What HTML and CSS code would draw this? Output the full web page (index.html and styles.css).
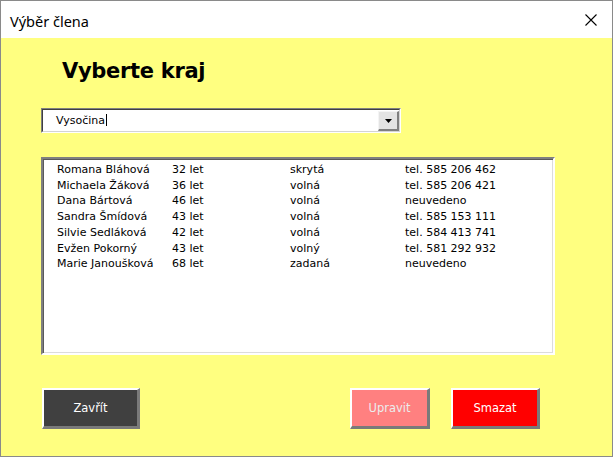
FILE: index.html
```html
<!DOCTYPE html>
<html lang="cs">
<head>
<meta charset="utf-8">
<title>Výběr člena</title>
<link rel="stylesheet" href="styles.css">
</head>
<body>
<div class="window">
  <div class="titlebar">
    <span class="title">Výběr člena</span>
    <svg class="close" width="12" height="12" viewBox="0 0 12 12" aria-hidden="true">
      <path d="M0.5 0.5 L11.5 11.5 M11.5 0.5 L0.5 11.5" stroke="#000" stroke-width="1.1" fill="none"/>
    </svg>
  </div>
  <div class="client">
    <h1 class="heading">Vyberte kraj</h1>
    <div class="combo">
      <div class="combo-inner">
        <div class="combo-text">Vysočina<span class="caret"></span></div>
        <div class="combo-btn">
          <svg width="7" height="4" viewBox="0 0 7 4" aria-hidden="true"><polygon points="0,0 7,0 3.5,4" fill="#000"/></svg>
        </div>
      </div>
    </div>
    <div class="listbox">
      <div class="row"><span>Romana Bláhová</span><span>32 let</span><span>skrytá</span><span>tel. 585 206 462</span></div>
      <div class="row"><span>Michaela Žáková</span><span>36 let</span><span>volná</span><span>tel. 585 206 421</span></div>
      <div class="row"><span>Dana Bártová</span><span>46 let</span><span>volná</span><span>neuvedeno</span></div>
      <div class="row"><span>Sandra Šmídová</span><span>43 let</span><span>volná</span><span>tel. 585 153 111</span></div>
      <div class="row"><span>Silvie Sedláková</span><span>42 let</span><span>volná</span><span>tel. 584 413 741</span></div>
      <div class="row"><span>Evžen Pokorný</span><span>43 let</span><span>volný</span><span>tel. 581 292 932</span></div>
      <div class="row"><span>Marie Janoušková</span><span>68 let</span><span>zadaná</span><span>neuvedeno</span></div>
    </div>
    <div class="buttons">
      <button class="btn btn-close">Zavřít</button>
      <button class="btn btn-edit">Upravit</button>
      <button class="btn btn-delete">Smazat</button>
    </div>
  </div>
</div>
</body>
</html>
```

FILE: styles.css
```css
* { box-sizing: border-box; }
html, body { margin: 0; padding: 0; background: #ffff80; }

.window {
  width: 613px;
  height: 457px;
  border: 1px solid #8a8a8a;
  background: #ffff80;
  display: flex;
  flex-direction: column;
}

.titlebar {
  height: 37px;
  background: #fff;
  display: flex;
  align-items: center;
  padding-left: 9px;
  flex: none;
}
.title {
  font-family: "Noto Sans", "DejaVu Sans", sans-serif;
  font-size: 14.5px;
  color: #000;
  position: relative;
  top: 1px;
}
.close {
  margin-left: auto;
  margin-right: 15px;
  display: block;
}

.client {
  flex: 1;
  padding-left: 40px;
  display: flex;
  flex-direction: column;
  align-items: flex-start;
}

.heading {
  margin: 21px 0 0 21px;
  font-family: "DejaVu Sans", Verdana, sans-serif;
  font-weight: bold;
  font-size: 21px;
  letter-spacing: -0.3px;
  line-height: 25px;
  color: #000;
}

/* Combo box: sunken 3D frame */
.combo {
  margin-top: 24px;
  width: 360px;
  height: 25px;
  border-style: solid;
  border-width: 1px;
  border-color: #808080 #fff #fff #808080;
}
.combo-inner {
  height: 100%;
  background: #fff;
  border-style: solid;
  border-width: 1px;
  border-color: #404040 #d4d4d4 #d4d4d4 #404040;
  display: flex;
  align-items: flex-start;
}
.combo-text {
  flex: 1;
  padding-left: 13px;
  font-family: "DejaVu Sans", Verdana, sans-serif;
  font-size: 11px;
  line-height: 21px;
  color: #000;
}
.caret {
  display: inline-block;
  width: 1px;
  height: 12px;
  background: #000;
  margin-left: 1px;
  vertical-align: -2px;
}
.combo-btn {
  width: 21px;
  height: 20px;
  margin-top: 1px;
  background: #e3e3e3;
  border-style: solid;
  border-width: 1px 2px 2px 1px;
  border-color: #f4f4f4 #7f7f7f #7f7f7f #f4f4f4;
  display: flex;
  align-items: center;
  justify-content: center;
}
.combo-btn svg { display: block; }

/* List box */
.listbox {
  margin-top: 24px;
  width: 514px;
  height: 198px;
  background: #fff;
  border-style: solid;
  border-width: 2px;
  border-color: #808080 #fff #fff #808080;
  box-shadow: inset 1px 1px 0 #5a5a5a, inset -1px -1px 0 #dcdcdc;
  padding: 3px 0 0 14px;
  font-family: "DejaVu Sans", Verdana, sans-serif;
  font-size: 11px;
  line-height: 15.7px;
  color: #000;
}
.row {
  display: grid;
  grid-template-columns: 115px 118px 115px auto;
  white-space: nowrap;
}

/* Command buttons */
.buttons {
  margin-top: 33px;
  width: 499px;
  display: flex;
  padding-left: 1px;
}
.btn {
  height: 41px;
  border-style: solid;
  border-width: 2px 3px 3px 2px;
  border-color: #fff #7a7a7a #7a7a7a #fff;
  font-family: "DejaVu Sans", Verdana, sans-serif;
  font-size: 11.5px;
  color: #fff;
  padding: 0;
  margin: 0;
  cursor: default;
}
.btn-close {
  width: 98px;
  background: #404040;
}
.btn-edit {
  width: 80px;
  background: #ff8080;
  color: #ececec;
  margin-left: auto;
}
.btn-delete {
  width: 89px;
  background: #ff0000;
  margin-left: 21px;
}
```
